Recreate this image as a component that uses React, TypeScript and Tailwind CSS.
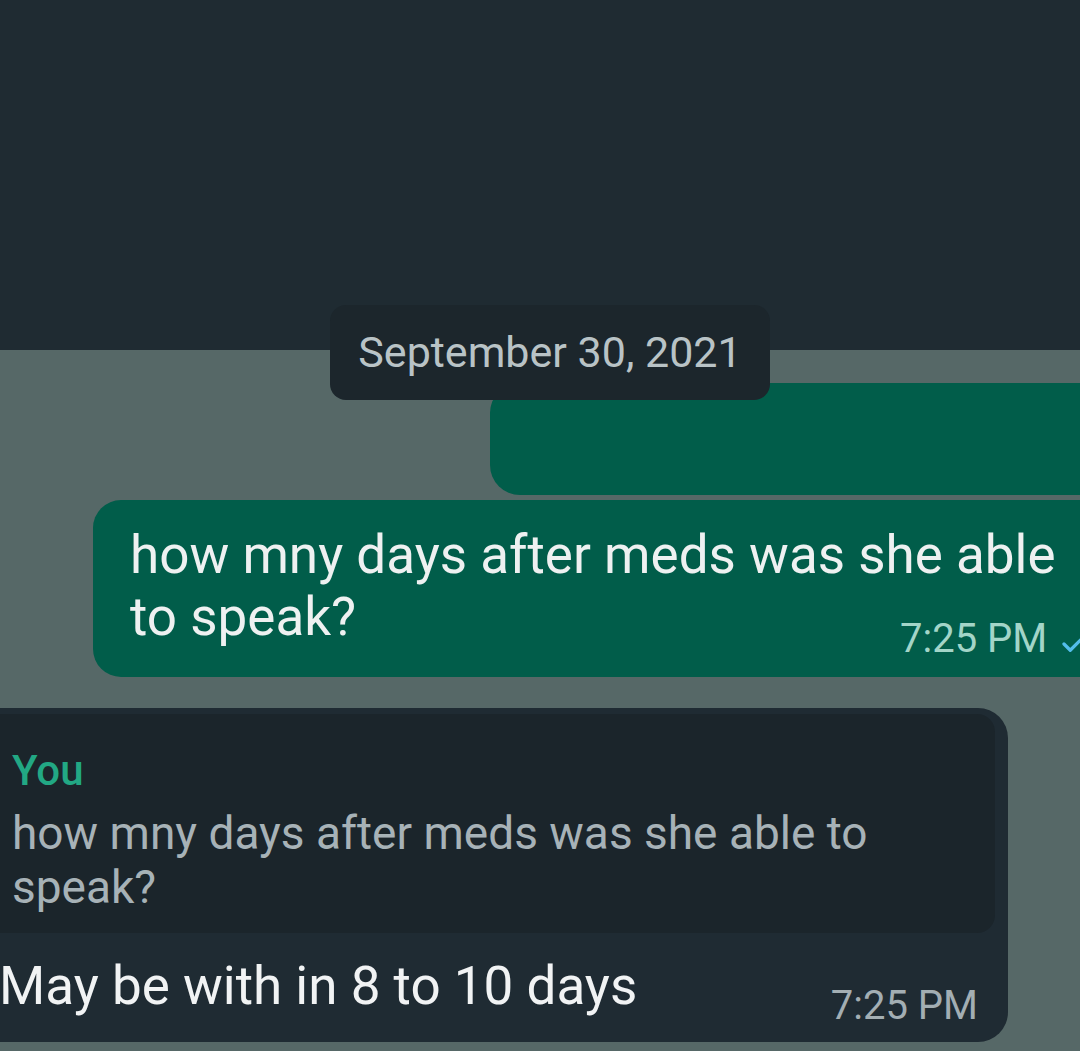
import { Check } from "lucide-react";

const FONT = "font-['Roboto','Liberation_Sans',sans-serif]";

export default function App() {
  return (
    <div className={`relative h-[1051px] w-[1080px] overflow-hidden bg-[#566867] ${FONT}`}>
      {/* chat header area, blurred out */}
      <div className="h-[350px] bg-[#1f2b32]" />

      {/* date chip */}
      <div className="relative z-10 -mt-[45px] flex pl-[330px]">
        <div className="flex h-[95px] w-[440px] items-center justify-center rounded-[16px] bg-[#1c262c] text-[43px] leading-none text-[#b9c3c6]">
          September 30, 2021
        </div>
      </div>

      {/* redacted outgoing message */}
      <div className="-mt-[17px] ml-[490px] h-[112px] w-[640px] rounded-l-[30px] bg-[#015d4a]" />

      {/* outgoing message */}
      <div className="mt-[5px] ml-[93px] flex h-[177px] w-[1040px] flex-col rounded-l-[28px] bg-[#015d4a] pl-[37px] pt-[24px]">
        <p className="w-[950px] text-[53px] leading-[62px] text-[#eef1f1]">
          how mny days after meds was she able to speak?
        </p>
        <div className="-mt-[33px] flex items-center justify-start pl-[770px]">
          <span className="text-[40px] leading-[47px] text-[#a3d5c8]">7:25 PM</span>
          <Check className="ml-[12px] mt-[10px] h-[30px] w-[30px] text-[#53bdeb]" strokeWidth={2.6} />
        </div>
      </div>

      {/* incoming reply with quote */}
      <div className="mt-[31px] -ml-[40px] flex h-[334px] w-[1048px] flex-col rounded-[30px] bg-[#1f2b33] pt-[6px] pr-[13px]">
        <div className="h-[219px] rounded-[18px] bg-[#1b252b] pl-[52px] pt-[32px]">
          <div className="text-[42px] font-medium leading-[50px] text-[#22a884]">You</div>
          <p className="mt-[10px] w-[900px] text-[46px] leading-[54px] text-[#a7b2b7]">
            how mny days after meds was she able to speak?
          </p>
        </div>
        <div className="flex items-end justify-between pl-[39px] pr-[17px] pt-[22px]">
          <span className="text-[53px] leading-[62px] text-[#f1f3f4]">May be with in 8 to 10 days</span>
          <span className="mb-[-12px] text-[40px] leading-[47px] text-[#a3aeb3]">7:25 PM</span>
        </div>
      </div>
    </div>
  );
}
